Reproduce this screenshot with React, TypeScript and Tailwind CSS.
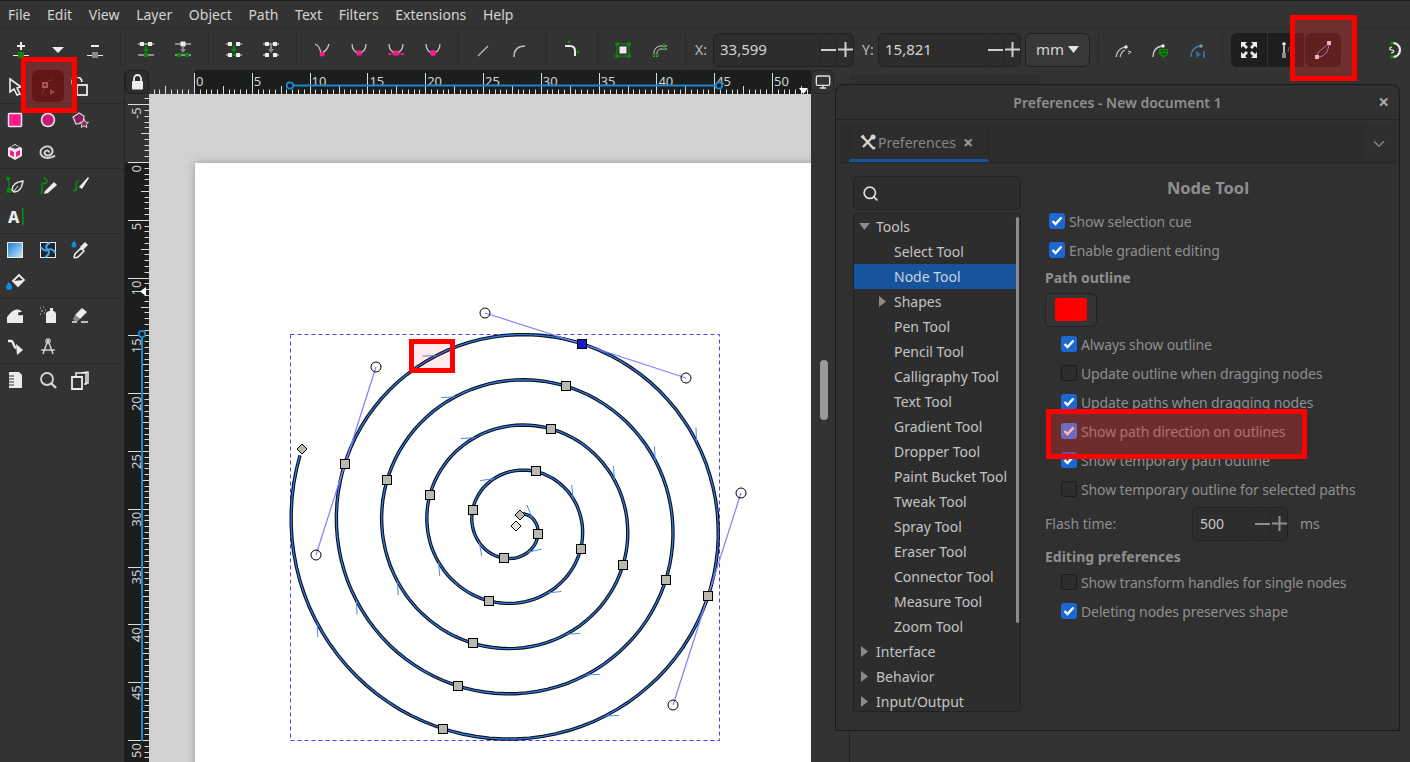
import { ChevronDown, Monitor, Search } from "lucide-react";
import type { ReactNode } from "react";

const W = "#ececec";
const G = "#0a8a0a";
const P = "#ff1a8c";
const GR = "#8a8a8a";

function Ic({ children, size = 20 }: { children: ReactNode; size?: number }) {
  return (
    <svg width={size} height={size} viewBox="0 0 20 20" fill="none" className="block">
      {children}
    </svg>
  );
}

const sq = (cx: number, cy: number, s: number, c: string) => (
  <rect x={cx - s / 2} y={cy - s / 2} width={s} height={s} fill={c} />
);

// top toolbar icons, grouped the way separators split them
const curveV = (
  <path d="M3 5c3 1 5 4 6 9M17 5c-1 4-3 7-7 9" stroke="#cfcfcf" strokeWidth="1.2" />
);
const curveU = <path d="M3 5c0 5 3 9 7 9s7-4 7-9" stroke="#cfcfcf" strokeWidth="1.2" />;

const nodeGroups: ReactNode[][] = [
  [
    <Ic key="a">
      <path d="M6 7h8M10 3v8" stroke={W} strokeWidth="2" />
      <path d="M2 16.500h16" stroke={W} />
      {sq(10, 16, 6, G)}
    </Ic>,
    <Ic key="b">
      <path d="M4 8h12l-6 6z" fill={W} />
    </Ic>,
    <Ic key="c">
      <path d="M6 7h8" stroke={W} strokeWidth="2" />
      <path d="M2 16.500h16" stroke={W} />
      {sq(10, 16, 6, GR)}
    </Ic>,
  ],
  [
    <Ic key="a">
      {sq(6, 5, 4, W)}
      {sq(14, 5, 4, W)}
      <path d="M2 5h16M2 16h16" stroke={W} />
      <path d="M10 7v4" stroke={G} strokeWidth="2" />
      <path d="M7 10h6l-3 4z" fill={G} />
      {sq(10, 16, 4, G)}
    </Ic>,
    <Ic key="b">
      <path d="M2 5h16M2 16h16" stroke={W} />
      {sq(10, 5, 5, W)}
      <path d="M10 7v4" stroke={GR} strokeWidth="2" />
      <path d="M7 10h6l-3 4z" fill={GR} />
      {sq(6, 16, 4, G)}
      {sq(14, 16, 4, G)}
    </Ic>,
  ],
  [
    <Ic key="a">
      <path d="M2 5h4M14 5h4M2 16h4M14 16h4" stroke={W} />
      {sq(6, 5, 4, W)}
      {sq(14, 5, 4, W)}
      {sq(6, 16, 4, W)}
      {sq(14, 16, 4, W)}
      <path d="M10 6v5" stroke={G} strokeWidth="2" />
      <path d="M7 10h6l-3 4z" fill={G} />
      <path d="M8 16h4" stroke={G} strokeWidth="2" />
    </Ic>,
    <Ic key="b">
      <path d="M2 5h4M14 5h4M2 16h4M14 16h4" stroke={W} />
      {sq(6, 5, 4, W)}
      {sq(14, 5, 4, W)}
      {sq(6, 16, 4, W)}
      {sq(14, 16, 4, W)}
      <path d="M8 5h4" stroke={GR} strokeWidth="2" />
      <path d="M10 6v5" stroke={GR} strokeWidth="2" />
      <path d="M7 10h6l-3 4z" fill={GR} />
    </Ic>,
  ],
  [
    <Ic key="a">
      {curveV}
      <circle cx="10" cy="15" r="2.500" fill={P} />
    </Ic>,
    <Ic key="b">
      {curveU}
      {sq(10, 14, 5, P)}
    </Ic>,
    <Ic key="c">
      {curveU}
      {sq(10, 14, 5, P)}
      <path d="M3 15h14" stroke={P} />
      <circle cx="3.500" cy="15" r="1.300" fill={P} />
      <circle cx="16.500" cy="15" r="1.300" fill={P} />
    </Ic>,
    <Ic key="d">
      {curveU}
      <circle cx="10" cy="14" r="3" fill={P} />
    </Ic>,
  ],
  [
    <Ic key="a">
      <path d="M4 17 14 7" stroke="#bdbdbd" strokeWidth="1.200" />
    </Ic>,
    <Ic key="b">
      <path d="M3 18c0-7 4-11 11-11" stroke="#bdbdbd" strokeWidth="1.500" />
    </Ic>,
  ],
  [
    <Ic key="a">
      <path d="M3 7h5c3 0 5 2 5 5v5" stroke={W} strokeWidth="2" />
      {sq(7, 3, 2.500, G)}
      {sq(16, 13, 2.500, G)}
    </Ic>,
  ],
  [
    <Ic key="a">
      <rect x="4" y="5" width="12" height="12" stroke={G} strokeWidth="1.200" />
      {sq(10, 11, 7, W)}
      {sq(4, 5, 3.500, G)}
      {sq(16, 5, 3.500, G)}
      {sq(4, 17, 3.500, G)}
      {sq(16, 17, 3.500, G)}
    </Ic>,
    <Ic key="b">
      <path d="M4 18v-4c0-4 3-7 7-7h6M7 18v-4c0-2 2-4 4-4h6" stroke="#d0d0d0" />
      {sq(4, 16, 2.500, G)}
      {sq(7.500, 16, 2.500, G)}
      {sq(14, 5.500, 2.500, G)}
      {sq(14, 9, 2.500, G)}
    </Ic>,
  ],
];

const Sep = () => (
  <div className="flex w-[14px] justify-center">
    <div className="h-[34px] w-px bg-[#2c2c2c]" />
  </div>
);

function Spin({ value, width }: { value: string; width: string }) {
  return (
    <div className={`flex h-[34px] items-center rounded-md border border-[#202020] bg-[#2d2d2d] ${width}`}>
      <span className="flex-1 pl-[6px] text-[15px] text-[#d4d4d4]">{value}</span>
      <div className="flex h-full w-[17px] items-center justify-center border-l border-[#282828]">
        <div className="h-[2px] w-[15px] bg-[#cfcfcf]" />
      </div>
      <div className="flex h-full w-[17px] items-center justify-center border-l border-[#282828]">
        <svg width="15" height="15" viewBox="0 0 15 15">
          <path d="M0 7.500h15M7.500 0v15" stroke="#cfcfcf" strokeWidth="2" />
        </svg>
      </div>
    </div>
  );
}

function TopBar() {
  const menu = ["File", "Edit", "View", "Layer", "Object", "Path", "Text", "Filters", "Extensions", "Help"];
  return (
    <>
      <div className="flex h-[28px] items-center gap-[16.700px] border-t border-[#1e1e1e] pl-[8px] text-[14px] text-[#d4d4d4]">
        {menu.map((m) => (
          <span key={m}>{m}</span>
        ))}
      </div>
      <div className="flex h-[42px] items-center border-t border-[#2b2b2b] pl-[2px]">
        {nodeGroups.map((group, i) => (
          <div key={i} className="flex -translate-y-[1px] items-center">
            {i > 0 && <Sep />}
            {group.map((icon, j) => (
              <div key={j} className="flex w-[37px] justify-center">
                {icon}
              </div>
            ))}
          </div>
        ))}
        <Sep />
        <span className="ml-[3px] mr-[3px] w-[15px] text-[14px] text-[#bdbdbd]">X:</span>
        <Spin value="33,599" width="w-[141px]" />
        <span className="ml-[8px] mr-[1px] w-[15px] text-[14px] text-[#bdbdbd]">Y:</span>
        <Spin value="15,821" width="w-[143px]" />
        <div className="ml-[4px] flex h-[34px] w-[65px] items-center justify-center gap-[4px] rounded-md border border-[#202020] bg-[#383838] text-[15px] text-[#d4d4d4]">
          mm
          <svg width="11" height="7" viewBox="0 0 11 7">
            <path d="M0 0h11L5.500 7z" fill="#e4e4e4" />
          </svg>
        </div>
        <div className="ml-[8px] h-[34px] w-px bg-[#2c2c2c]" />
        <div className="ml-[14px] w-[37px]">
          <Ic>
            <path d="M3 17c1-6 4-9 9-10M7 17c1-4 2-6 5-7" stroke="#cfcfcf" strokeWidth="1.200" />
            <circle cx="13" cy="7" r="1.700" fill={W} />
            <path d="M15 11l3 1-3 2" stroke="#cfcfcf" />
          </Ic>
        </div>
        <div className="w-[38px]">
          <Ic>
            <path d="M3 17c0-6 3-10 9-11" stroke="#cfcfcf" strokeWidth="1.300" />
            <circle cx="13" cy="6" r="1.700" fill={W} />
            <path d="M9 9h9v5l-4.500 4L9 14z" fill={G} />
            <path d="M11 11h2M14.500 11h2M12 14h4" stroke="#111" />
          </Ic>
        </div>
        <div className="w-[26px]">
          <Ic>
            <path d="M3 17c0-6 3-10 9-11" stroke="#4f7d92" strokeWidth="1.300" />
            <circle cx="13" cy="6" r="1.700" fill="#7d98a5" />
            <path d="M8 11l5 3.500L8 18zM15 11h2v7h-2z" fill="#2c6f9c" />
          </Ic>
        </div>
        <div className="ml-[8px] h-[34px] w-px bg-[#2c2c2c]" />
        <div className="ml-[8px] flex gap-px">
          <div className="flex h-[34px] w-[36px] items-center justify-center rounded-l-md bg-[#1e1e1e]">
            <Ic>
              <path d="M2 2h6L6 4l3 3-2 2-3-3-2 2zM18 2v6l-2-2-3 3-2-2 3-3-2-2zM2 18v-6l2 2 3-3 2 2-3 3 2 2zM18 18h-6l2-2-3-3 2-2 3 3 2-2z" fill={W} />
            </Ic>
          </div>
          <div className="flex h-[34px] w-[36px] items-center justify-center bg-[#1e1e1e]">
            <Ic>
              <circle cx="8" cy="4" r="1.800" fill={W} />
              <path d="M8 6v7" stroke={W} strokeWidth="1.500" />
              <path d="M6 13h4v5H6z" fill={GR} />
              <path d="M12 12c0-3 1-5 3-6" stroke="#777" />
            </Ic>
          </div>
          <div className="flex h-[34px] w-[36px] items-center justify-center rounded-md bg-[#1e1e1e]">
            <Ic>
              <path d="M4 17C4 10 10 10 16 3M4 17c8 0 12-6 12-14" stroke="#7aa0ff" strokeWidth="1" />
              {sq(4, 17, 4, W)}
              {sq(16, 3, 4, W)}
            </Ic>
          </div>
        </div>
        <div className="ml-[42px]">
          <Ic>
            <path d="M10 3a7 7 0 0 1 0 14" stroke={W} strokeWidth="2.200" />
            <path d="M9 7c-3 0-3 3 0 3s2 3-1 3" stroke={W} strokeWidth="1.200" />
            {sq(9, 3, 3, G)}
            {sq(9, 17, 3, G)}
          </Ic>
        </div>
      </div>
    </>
  );
}

const toolGroups: ReactNode[][][] = [
  [
    [
      <path key="a" d="M5 2l11 8-4 1 3 6-3 1-3-6-4 3z" stroke={W} strokeWidth="1.600" />,
      <g key="b">
        {sq(7, 8, 6, W)}
        {sq(7, 8, 2, "#6b1f1f")}
        <path d="M4 18c0-3 1-6 3-7M10 4c2-1 3-1 5-1" stroke="#9c7c7c" />
        <path d="M12 12l5 3-5 3z" fill="#c9bcbc" />
      </g>,
      <g key="c">
        <rect x="7" y="8" width="10" height="10" stroke={W} strokeWidth="1.800" />
        <path d="M4 9a5 5 0 1 1 8 -4" stroke={W} strokeWidth="1.800" />
      </g>,
    ],
  ],
  [
    [
      <rect key="a" x="3.500" y="3.500" width="13" height="13" rx="1" fill={P} stroke={W} strokeWidth="1.500" />,
      <circle key="b" cx="10" cy="10" r="6.500" fill="#c71a74" stroke={W} strokeWidth="1.500" />,
      <g key="c">
        <path d="M3 7l6-4 5 3-1 7-7 1z" fill="#8a1f5f" stroke="#d8d8d8" strokeWidth="1.200" />
        <path d="M14 9l1.500 3 3 .4-2.200 2 .6 3-2.900-1.500-2.700 1.500.5-3-2-2 3-.4z" fill="#8a1f5f" stroke="#d8d8d8" />
      </g>,
    ],
    [
      <g key="a">
        <path d="M10 2l7 4v8l-7 4-7-4V6z" fill={W} />
        <path d="M10 7l5-2-5-2-5 2z" fill="#444" />
        <path d="M5 8l4 2v5l-4-2zM11 10l4-2v5l-4 2z" fill={P} />
      </g>,
      <path key="b" d="M10.500 10.500c1.500-1-1-3-3-1.500s-.5 5 3 4.500 5-4 3.500-6.500S9 3.500 5.500 5.500 1.500 11.500 4 14s9 3 13-.5" stroke="#d4d4d4" strokeWidth="2" />,
    ],
  ],
  [
    [
      <g key="a">
        <path d="M3 4c2 3 0 8 1 11" stroke={G} strokeWidth="1.300" />
        <circle cx="3" cy="3.500" r="2" fill={G} />
        {sq(4, 15.500, 4.500, G)}
        <path d="M7 15c0-5 3-8 11-9-1 7-4 11-9 11z" stroke={W} strokeWidth="1.500" />
        <path d="M9 16l4-5" stroke={W} />
      </g>,
      <g key="b">
        <path d="M3 17c4-2-1-5 1-8s4 1 5-2-3-3-3-5" stroke={G} strokeWidth="1.500" />
        <path d="M7 16l9-9 3 3-9 8-4 1z" fill={W} />
        <path d="M3 16l2 2-3 1z" fill={G} />
      </g>,
      <g key="c">
        <path d="M4 16c3-2 3-3 2-6s2-3 3-5" stroke={G} strokeWidth="1.500" />
        <path d="M3 17l2-4 3 2z" fill={G} />
        <path d="M9 12l9-10 1 1-7 11z" fill={W} />
      </g>,
    ],
    [
      <g key="a">
        <text x="3" y="16" fontSize="16" fontWeight="800" fill={W} fontFamily="'Noto Sans',sans-serif">
          A
        </text>
        <rect x="17" y="1" width="1.600" height="17" fill={G} />
      </g>,
    ],
  ],
  [
    [
      <g key="a">
        <defs>
          <linearGradient id="lg" x1="0" y1="0" x2="1" y2="1">
            <stop offset="0" stopColor="#0f7fd6" />
            <stop offset="1" stopColor="#cfe8f8" />
          </linearGradient>
        </defs>
        <rect x="2.500" y="2.500" width="15" height="15" fill="url(#lg)" stroke={W} />
      </g>,
      <g key="b">
        <rect x="2.500" y="2.500" width="15" height="15" fill="#1c2530" stroke={W} />
        <path d="M10 10C7 8 8 4 12 3M10 10c3-2 6 0 7 3M10 10c2 3 0 6-3 7M10 10c-3 1-6 0-7-3" stroke="#3fa8ea" strokeWidth="2" />
      </g>,
      <g key="c">
        <path d="M4 1c2 2 2.500 3 2.500 4A2.500 2.500 0 0 1 1.500 5C1.500 4 2 3 4 1z" fill="#0f8fe6" />
        <path d="M5 18l-1-1 1-3 6-6 3 3-6 6z" stroke={W} strokeWidth="1.500" />
        <path d="M10 7l5-5 3 3-5 5z" fill={W} />
      </g>,
    ],
    [
      <g key="a">
        <path d="M8 9l6-6 5 5-6 6z" stroke={W} strokeWidth="1.800" />
        <path d="M8 9l11-1-6 6z" fill={W} />
        <path d="M4 10c2 2.500 3 4 3 5a3 3 0 0 1-6 0c0-1 1-3 3-5z" fill="#0f8fe6" />
      </g>,
    ],
  ],
  [
    [
      <path key="a" d="M2 18v-6c2-2 4-6 8-7 3-1 6 0 7 2-2 0-4 0-4 2s3 1 5 1v8z" fill={W} />,
      <g key="b">
        <path d="M8 9c0-2 2-3 4-3V3h3v3c2 0 3 2 3 3v9H8z" fill={W} />
        <path d="M2 3h1M5 2h1M3 6h2M7 5h1M2 9h1M6 8h1" stroke="#9a9a9a" strokeWidth="1.500" />
      </g>,
      <g key="c">
        <path d="M5 10l7-7 5 4-7 7z" fill={W} />
        <path d="M5 10l5 4-2 2H5l-2-2z" fill={GR} />
        <path d="M2 17h5M11 17h7" stroke={W} strokeWidth="1.500" />
      </g>,
    ],
    [
      <g key="a">
        <path d="M3 4h3c3 0 2 6 5 7" stroke={W} strokeWidth="2.400" fill="none" />
        <path d="M11 7l7 6-6 5z" fill={W} />
      </g>,
      <g key="b">
        <path d="M10 3L5 17M10 3l5 14M3 13h14" stroke="#d0d0d0" strokeWidth="1.500" />
        <circle cx="10" cy="4" r="2.200" stroke="#d0d0d0" strokeWidth="1.200" />
      </g>,
    ],
  ],
  [
    [
      <g key="a">
        <path d="M4 2h10l3 3v13H4z" fill={W} />
        <path d="M4 6h5M4 9h5M4 12h5M4 15h5" stroke="#333" strokeWidth="1.200" />
      </g>,
      <g key="b">
        <circle cx="9" cy="9" r="6" stroke="#d6d6d6" strokeWidth="1.800" />
        <path d="M13.500 13.500L18 18" stroke="#d6d6d6" strokeWidth="2.400" />
      </g>,
      <g key="c">
        <path d="M2 7h10v12H2z" stroke={W} strokeWidth="1.800" />
        <path d="M6 6V3h10v11h-2M10 3l8-1v11h-2" stroke={W} strokeWidth="1.500" />
      </g>,
    ],
  ],
];

function ToolBox() {
  return (
    <div className="flex w-[125px] shrink-0 flex-col border-r border-[#222] pt-[1.500px]">
      {toolGroups.map((group, i) => (
        <div key={i} className={i < toolGroups.length - 1 ? "border-b border-[#2a2a2a]" : ""}>
          {group.map((row, j) => (
            <div key={j} className={`flex items-center pl-[5px] ${i === 0 ? "h-[31px]" : "h-[32px]"}`}>
              {row.map((icon, k) => (
                <div key={k} className="flex w-[32.500px] justify-start">
                  <Ic>{icon}</Ic>
                </div>
              ))}
            </div>
          ))}
        </div>
      ))}
    </div>
  );
}

// ruler ticks are at 0.5 user units: 5.78px on screen
const STEP = 5.78;
const tickLen = (i: number) => (i % 10 === 0 ? 21 : i % 5 === 0 ? 8 : 4.5);

function TopRuler() {
  const ticks = Array.from({ length: 116 }, (_, i) => i - 8);
  return (
    <div className="relative h-[24px] flex-1 overflow-hidden bg-[#1c1e1e]">
      <div className="absolute inset-y-0 left-0 w-[46px] bg-[#333]" />
      <svg width="662" height="24" viewBox="149 70 662 24" className="absolute inset-0">
        {ticks.map((i) => {
          const x = Math.round(195 + i * STEP) - 0.5;
          return <path key={i} d={`M${x} 94v${-tickLen(i)}`} stroke="#dcdcdc" strokeWidth="1" />;
        })}
        {ticks
          .filter((i) => i % 10 === 0 && i >= 0)
          .map((i) => (
            <text key={i} x={196 + i * STEP} y="86" fontSize="13" fill="#d4d4d4" fontFamily="'Noto Sans',sans-serif">
              {i / 2}
            </text>
          ))}
        <path d="M290 85.500H719" stroke="#1f86d2" strokeWidth="2" />
        <circle cx="290" cy="85.500" r="3.200" fill="#1c1e1e" stroke="#1f86d2" strokeWidth="1.800" />
        <circle cx="719" cy="85.500" r="3.200" fill="#1c1e1e" stroke="#1f86d2" strokeWidth="1.800" />
        <path d="M799 88h9l-4.500 6z" fill="#fff" />
      </svg>
    </div>
  );
}

function LeftRuler() {
  const ticks = Array.from({ length: 118 }, (_, i) => i - 12);
  return (
    <div className="relative w-[24px] shrink-0 overflow-hidden bg-[#1c1e1e]">
      <div className="absolute inset-x-0 top-0 h-[69px] bg-[#333]" />
      <svg width="24" height="668" viewBox="125 94 24 668" className="absolute inset-0">
        {ticks.map((i) => {
          const y = Math.round(163 + i * STEP) - 0.5;
          return <path key={i} d={`M149 ${y}h${-tickLen(i)}`} stroke="#dcdcdc" strokeWidth="1" />;
        })}
        {ticks
          .filter((i) => i % 10 === 0)
          .map((i) => (
            <text
              key={i}
              transform={`translate(141 ${163 + i * STEP + 2}) rotate(-90)`}
              textAnchor="end"
              fontSize="13"
              fill="#d4d4d4"
              fontFamily="'Noto Sans',sans-serif"
            >
              {i / 2}
            </text>
          ))}
        <path d="M142 334V741" stroke="#1f86d2" strokeWidth="2" />
        <circle cx="142" cy="334" r="3.200" fill="#1c1e1e" stroke="#1f86d2" strokeWidth="1.800" />
        <path d="M146 287v9l-6-4.500z" fill="#fff" />
      </svg>
    </div>
  );
}

type Pt = [number, number];

// archimedean spiral, clockwise: t=0 points left, t=.25 up, one turn per unit of t
const CX = 516;
const CY = 525.5;
const PITCH = 45.3;
const radius = (t: number) => PITCH * t - 1.7;
const spiralAt = (t: number): Pt => {
  const a = Math.PI + t * 2 * Math.PI;
  return [CX + radius(t) * Math.cos(a), CY + radius(t) * Math.sin(a)];
};

const NODE_SPOTS: Pt[] = [
  [537, 534], [504, 558], [473, 510], [535, 473], [580, 549], [489, 601],
  [431, 495], [551, 430], [623, 565], [473, 643], [388, 480], [566, 387], [666, 580],
  [458, 686], [345, 464], [582, 344], [708, 596], [443, 729],
];

const paramOf = ([x, y]: Pt) => {
  const dx = x - CX;
  const dy = y - CY;
  const frac = ((Math.atan2(dy, dx) - Math.PI) / (2 * Math.PI) + 2) % 1;
  const turns = (Math.hypot(dx, dy) + 1.7) / PITCH;
  return frac + Math.round(turns - frac);
};

function buildSpiral() {
  const pts: string[] = [];
  for (let t = 0.3; t <= 5.05; t += 0.01) {
    const [x, y] = spiralAt(t);
    pts.push(`${x.toFixed(1)} ${y.toFixed(1)}`);
  }
  const params = NODE_SPOTS.map(paramOf);
  const nodes = params.map(spiralAt);
  // small direction marks half way along each segment
  const ticks = [0.3, ...params, 5.05].slice(0, -1).map((t, i, all) => {
    const next = all[i + 1] ?? 5.05;
    const mid = (t + next) / 2;
    const p = spiralAt(mid);
    const q = spiralAt(mid + 0.005);
    const ang = Math.atan2(q[1] - p[1], q[0] - p[0]) + Math.PI + 0.42;
    return { a: p, b: [p[0] + 14 * Math.cos(ang), p[1] + 14 * Math.sin(ang)] as Pt };
  });
  return { d: `M${pts.join("L")}`, ticks, nodes };
}

function Diamond({ x, y, fill = "#b9b9b0" }: { x: number; y: number; fill?: string }) {
  return <path d={`M${x} ${y - 5}l5 5-5 5-5-5z`} fill={fill} stroke="#000" />;
}

function Canvas() {
  const { d, ticks, nodes } = buildSpiral();
  const handles: [Pt, Pt][] = [
    [[582, 344], [485, 313]],
    [[582, 344], [686, 378]],
    [[345, 464], [376, 367]],
    [[345, 464], [316, 555]],
    [[708, 596], [741, 493]],
    [[708, 596], [673, 705]],
  ];
  return (
    <div className="relative flex-1 overflow-hidden bg-[#d1d1d1]">
      <div className="absolute left-[46px] top-[69px] h-[700px] w-[700px] bg-white shadow-[0_0_8px_rgba(0,0,0,0.25)]" />
      <svg width="662" height="668" viewBox="149 94 662 668" className="absolute inset-0">
        <rect x="290.500" y="334.500" width="429" height="406" fill="none" stroke="#4444ee" strokeDasharray="4 3" />
        <path d={d} fill="none" stroke="#0c1014" strokeWidth="3.400" />
        <path d={d} fill="none" stroke="#2f76e0" strokeWidth="1.300" />
        {ticks.map((t, i) => (
          <path key={i} d={`M${t.a[0]} ${t.a[1]}L${t.b[0]} ${t.b[1]}`} stroke="#4f8ae8" strokeWidth="1" />
        ))}
        {handles.map(([a, b], i) => (
          <g key={i}>
            <path d={`M${a[0]} ${a[1]}L${b[0]} ${b[1]}`} stroke="#8080ff" strokeWidth="1.200" />
            <circle cx={b[0]} cy={b[1]} r="5" fill="none" stroke="#000" />
          </g>
        ))}
        {nodes.map(([x, y], i) => {
          const selected = NODE_SPOTS[i][0] === 582;
          return (
            <rect
              key={i}
              x={Math.round(x) - 4.5}
              y={Math.round(y) - 4.5}
              width="9"
              height="9"
              fill={selected ? "#1a1acc" : "#b9b9b0"}
              stroke="#000"
            />
          );
        })}
        <Diamond x={302} y={449} />
        <Diamond x={520} y={515} />
        <Diamond x={516} y={526} fill="#e4e4dc" />
      </svg>
    </div>
  );
}

function Check({ on, tint = "bg-[#1c68d2]" }: { on: boolean; tint?: string }) {
  return on ? (
    <div className={`flex h-[16px] w-[16px] shrink-0 items-center justify-center rounded-[3px] ${tint}`}>
      <svg width="12" height="10" viewBox="0 0 12 10">
        <path d="M1.500 5l3 3 6-6.500" stroke="#fff" strokeWidth="2.400" fill="none" />
      </svg>
    </div>
  ) : (
    <div className="h-[16px] w-[16px] shrink-0 rounded-[3px] border border-[#1c1c1c] bg-[#2d2d2d]" />
  );
}

function CheckRow({ on, label, indent = false, tint }: { on: boolean; label: string; indent?: boolean; tint?: string }) {
  return (
    <div
      className={`flex h-[29px] items-center gap-[4px] text-[14px] tracking-[-0.12px] text-[#8f8f8f] ${
        indent ? "pl-[16px]" : "pl-[4px]"
      }`}
    >
      <Check on={on} tint={tint} />
      <span>{label}</span>
    </div>
  );
}

const TREE: { label: string; depth: 0 | 1; arrow?: "down" | "right"; selected?: boolean }[] = [
  { label: "Tools", depth: 0, arrow: "down" },
  { label: "Select Tool", depth: 1 },
  { label: "Node Tool", depth: 1, selected: true },
  { label: "Shapes", depth: 1, arrow: "right" },
  { label: "Pen Tool", depth: 1 },
  { label: "Pencil Tool", depth: 1 },
  { label: "Calligraphy Tool", depth: 1 },
  { label: "Text Tool", depth: 1 },
  { label: "Gradient Tool", depth: 1 },
  { label: "Dropper Tool", depth: 1 },
  { label: "Paint Bucket Tool", depth: 1 },
  { label: "Tweak Tool", depth: 1 },
  { label: "Spray Tool", depth: 1 },
  { label: "Eraser Tool", depth: 1 },
  { label: "Connector Tool", depth: 1 },
  { label: "Measure Tool", depth: 1 },
  { label: "Zoom Tool", depth: 1 },
  { label: "Interface", depth: 0, arrow: "right" },
  { label: "Behavior", depth: 0, arrow: "right" },
  { label: "Input/Output", depth: 0, arrow: "right" },
];

function Tree() {
  return (
    <div className="relative mt-[3px] h-[499px] overflow-hidden rounded-sm border border-[#222] bg-[#2d2d2d]">
      {TREE.map((t) => (
        <div
          key={t.label}
          className={`relative flex h-[25px] w-[164px] items-center text-[14px] ${
            t.selected ? "bg-[#17549b] text-[#c8d4e4]" : "text-[#c4c4c4]"
          } ${t.depth === 0 ? "pl-[22px]" : "pl-[40px]"}`}
        >
          {t.arrow === "down" && (
            <svg width="11" height="7" viewBox="0 0 11 7" className="absolute left-[5px] top-[9px]">
              <path d="M0 0h11L5.500 7z" fill="#8a8a8a" />
            </svg>
          )}
          {t.arrow === "right" && (
            <svg width="7" height="11" viewBox="0 0 7 11" className={`absolute top-[7px] ${t.depth === 0 ? "left-[7px]" : "left-[25px]"}`}>
              <path d="M0 0v11l7-5.500z" fill="#8a8a8a" />
            </svg>
          )}
          {t.label}
        </div>
      ))}
      <div className="absolute right-[1px] top-[3px] h-[406px] w-[3px] rounded-full bg-[#8a8a8a]" />
    </div>
  );
}

function PrefsWindow() {
  return (
    <div className="absolute left-[835px] top-[84px] flex h-[647px] w-[565px] flex-col rounded-t-lg border border-[#1a1a1a] bg-[#303030]">
      <div className="relative flex h-[35px] shrink-0 items-center justify-center border-b border-[#242424] text-[14px] font-semibold text-[#8f8f8f]">
        Preferences - New document 1
        <span className="absolute right-[10px] text-[19px] font-bold leading-none text-[#a8a8a8]">×</span>
      </div>
      <div className="ml-[4px] mr-[3px] mt-[5px] flex h-[38px] shrink-0 items-stretch justify-between border-b border-[#282828] bg-[#2d2d2d]">
        <div className="ml-[9px] flex w-[140px] items-center gap-[1px] border-x border-[#282828] border-b-[3px] border-b-[#17549b] pl-[9px] text-[14px] text-[#868686]">
          <svg width="18" height="18" viewBox="0 0 18 18">
            <path d="M3 3l11 12" stroke="#d4d4d4" strokeWidth="2.400" />
            <path d="M15 2.500 4 14" stroke="#d4d4d4" strokeWidth="2.400" />
            <path d="M1.500 4 4 1.500 6 4 4 6zM16.500 16l-3 .5-.5-3 3 .5z" fill="#d4d4d4" />
            <circle cx="14" cy="4" r="2.600" fill="#d4d4d4" />
          </svg>
          Preferences
          <span className="ml-[6px] text-[18px] font-bold leading-none text-[#9a9a9a]">×</span>
        </div>
        <div className="m-[2px] flex w-[30px] items-center justify-center rounded-sm bg-[#2f2f2f]">
          <ChevronDown size={18} className="text-[#808080]" />
        </div>
      </div>
      <div className="flex flex-1 pl-[17px] pt-[13px]">
        <div className="w-[168px] shrink-0">
          <div className="flex h-[34px] items-center rounded-md border border-[#222] bg-[#2d2d2d] pl-[8px]">
            <Search size={17} strokeWidth={2.4} className="text-[#dedede]" />
          </div>
          <Tree />
        </div>
        <div className="ml-[24px] flex w-[326px] flex-col">
          <div className="flex h-[24px] items-center justify-center text-[16.500px] font-bold text-[#8f8f8f]">Node Tool</div>
          <div className="h-[6.500px]" />
          <CheckRow on label="Show selection cue" />
          <CheckRow on label="Enable gradient editing" />
          <div className="flex h-[26px] items-center text-[14px] font-bold text-[#8f8f8f]">Path outline</div>
          <div className="mt-[2px] flex h-[34px] w-[52px] items-center justify-center rounded-md border border-[#222] bg-[#343434]">
            <div className="h-[23px] w-[32px] rounded-[3px] bg-[#ff0000]" />
          </div>
          <div className="h-[3px]" />
          <CheckRow indent on label="Always show outline" />
          <CheckRow indent on={false} label="Update outline when dragging nodes" />
          <CheckRow indent on label="Update paths when dragging nodes" />
          <CheckRow indent on tint="bg-[#3389ff]" label="Show path direction on outlines" />
          <CheckRow indent on label="Show temporary path outline" />
          <CheckRow indent on={false} label="Show temporary outline for selected paths" />
          <div className="mt-[3px] flex h-[34px] items-center text-[14px] text-[#8f8f8f]">
            <span className="w-[147px]">Flash time:</span>
            <div className="flex h-[34px] w-[96px] items-center rounded-md border border-[#222] bg-[#2d2d2d]">
              <span className="flex-1 pl-[7px] text-[14px] text-[#c8c8c8]">500</span>
              <div className="flex h-full w-[17px] items-center justify-center border-l border-[#282828]">
                <div className="h-[2px] w-[15px] bg-[#8f8f8f]" />
              </div>
              <div className="flex h-full w-[17px] items-center justify-center border-l border-[#282828]">
                <svg width="15" height="15" viewBox="0 0 15 15">
                  <path d="M0 7.500h15M7.500 0v15" stroke="#8f8f8f" strokeWidth="2" />
                </svg>
              </div>
            </div>
            <span className="ml-[12px]">ms</span>
          </div>
          <div className="flex h-[26px] items-end text-[14px] font-bold text-[#8f8f8f]">Editing preferences</div>
          <div className="h-[1px]" />
          <CheckRow indent on={false} label="Show transform handles for single nodes" />
          <CheckRow indent on label="Deleting nodes preserves shape" />
        </div>
      </div>
      <div className="h-[18px]" />
    </div>
  );
}

export default function App() {
  return (
    <div className="relative h-[762px] w-[1410px] overflow-hidden bg-[#333333] font-['Noto_Sans',sans-serif]">
      <TopBar />
      <div className="flex h-[692px]">
        <ToolBox />
        <div className="flex flex-1 flex-col">
          <div className="flex h-[24px]">
            <div className="flex w-[24px] shrink-0 items-center justify-center rounded-md border border-[#1e1e1e] bg-[#2d2d2d]">
              <svg width="13" height="16" viewBox="0 0 13 16">
                <path d="M3 7V4.500a3.500 3.500 0 0 1 7 0V7" stroke="#ececec" strokeWidth="1.800" fill="none" />
                <rect x="1" y="7" width="11" height="8.500" rx="1" fill="#ececec" />
              </svg>
            </div>
            <TopRuler />
            <div className="flex w-[23px] shrink-0 items-center justify-center rounded-md border border-[#242424]">
              <Monitor size={16} className="text-[#e4e4e4]" />
            </div>
            <div className="w-[576px] shrink-0 pl-[16px] pt-[4px]">
              <div className="h-[20px] w-[190px] bg-[#2f2f2f]" />
            </div>
          </div>
          <div className="flex flex-1">
            <LeftRuler />
            <Canvas />
            <div className="relative w-[23px] shrink-0">
              <div className="absolute left-[9px] top-[266px] h-[60px] w-[8px] rounded-full bg-[#9a9a9a]" />
            </div>
            <div className="w-[16px] shrink-0 border-r border-[#222]" />
            <div className="w-[560px] shrink-0" />
          </div>
        </div>
      </div>
      <PrefsWindow />
      {/* red annotations laid over the screenshot */}
      <div className="absolute left-[21px] top-[57px] h-[56px] w-[56px] border-[5px] border-[#ff0000] bg-[rgba(255,40,40,0.3)]" />
      <div className="absolute left-[32px] top-[70px] h-[32px] w-[32px] rounded-md bg-[rgba(90,0,0,0.5)]" />
      <div className="absolute left-[1290px] top-[15px] h-[66px] w-[67px] border-[5px] border-[#ff0000] bg-[rgba(255,40,40,0.3)]" />
      <div className="absolute left-[409px] top-[339px] h-[34px] w-[46px] border-[5px] border-[#ff0000] bg-[rgba(255,0,0,0.08)]" />
      <div className="absolute left-[1046px] top-[409px] h-[50px] w-[261px] border-[5px] border-[#ff0000] bg-[rgba(255,40,40,0.3)]" />
    </div>
  );
}
